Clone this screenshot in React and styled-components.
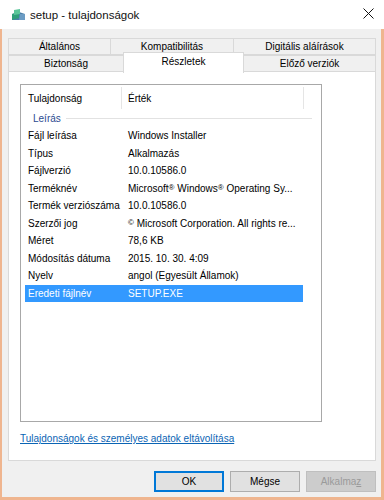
import React from 'react';
import styled, { createGlobalStyle } from 'styled-components';

const GlobalStyle = createGlobalStyle`
  html, body {
    margin: 0;
    padding: 0;
    background: #ffffff;
  }
  body {
    font-family: 'Liberation Sans', Arial, sans-serif;
    color: #000;
  }
`;

const tabRows = [
  [
    { label: 'Általános', w: 103 },
    { label: 'Kompatibilitás', w: 124 },
    { label: 'Digitális aláírások', w: 143 },
  ],
  [
    { label: 'Biztonság', w: 116 },
    { label: 'Részletek', w: 121, active: true },
    { label: 'Előző verziók', w: 133 },
  ],
];

function App() {
  const details = [
    { name: 'Fájl leírása', value: 'Windows Installer' },
    { name: 'Típus', value: 'Alkalmazás' },
    { name: 'Fájlverzió', value: '10.0.10586.0' },
    { name: 'Terméknév', value: <>Microsoft<Mark>®</Mark> Windows<Mark>®</Mark> Operating Sy...</> },
    { name: 'Termék verziószáma', value: '10.0.10586.0' },
    { name: 'Szerzői jog', value: <><Mark>©</Mark> Microsoft Corporation. All rights re...</> },
    { name: 'Méret', value: '78,6 KB' },
    { name: 'Módosítás dátuma', value: '2015. 10. 30. 4:09' },
    { name: 'Nyelv', value: 'angol (Egyesült Államok)' },
    { name: 'Eredeti fájlnév', value: 'SETUP.EXE', selected: true },
  ];

  return (
    <>
      <GlobalStyle />
      <Window>
        <TitleBar>
          <svg width="15" height="12" viewBox="0 0 15 12">
            <path d="M1 5 L8 3 L14 5 L14 11 L1 11 Z" fill="#4a7fa8" />
            <path d="M1 5 L8 3 L8 9 L1 11 Z" fill="#2f9e7a" />
            <path d="M3 1 L9 0 L9 5 L3 6 Z" fill="#5bc59a" />
            <path d="M9 5 L14 5 L14 11 L8 11 Z" fill="#6c9cc4" />
          </svg>
          <Title>setup - tulajdonságok</Title>
          <CloseButton>
            <svg width="11" height="11" viewBox="0 0 11 11">
              <path d="M0.5 0.5 L10.5 10.5 M10.5 0.5 L0.5 10.5" stroke="#111" strokeWidth="1" />
            </svg>
          </CloseButton>
        </TitleBar>

        <Frame>
          <Tabs>
            {tabRows.map((row, i) => (
              <TabRow key={i}>
                {row.map((t) => (
                  <Tab key={t.label} $w={t.w} $active={t.active}>
                    {t.label}
                  </Tab>
                ))}
              </TabRow>
            ))}
          </Tabs>

          <Pane>
            <ListBox>
              <HeaderRow>
                <HeaderCell $w={101} $pad={7}>Tulajdonság</HeaderCell>
                <HeaderCell $w={182} $pad={6}>Érték</HeaderCell>
              </HeaderRow>
              <GroupRow>
                <GroupLabel>Leírás</GroupLabel>
                <GroupLine />
              </GroupRow>
              {details.map((d) => (
                <Row key={d.name} $selected={d.selected}>
                  <NameCell>{d.name}</NameCell>
                  <ValueCell>{d.value}</ValueCell>
                </Row>
              ))}
            </ListBox>
            <RemoveLink href="#">Tulajdonságok és személyes adatok eltávolítása</RemoveLink>
          </Pane>

          <ButtonRow>
            <Button $default>OK</Button>
            <Button>Mégse</Button>
            <Button disabled>
              Alkalma<u>z</u>
            </Button>
          </ButtonRow>
        </Frame>
      </Window>
    </>
  );
}

const Window = styled.div`
  width: 384px;
  height: 500px;
  display: flex;
  flex-direction: column;
  background: #fff;
  overflow: hidden;
`;

const TitleBar = styled.div`
  height: 29px;
  flex-shrink: 0;
  display: flex;
  align-items: center;
  padding-left: 9px;
  background: #ffffff;
  border-left: 2px solid #ffffff;
`;

const Title = styled.span`
  margin-left: 4px;
  font-size: 11.5px;
  color: #111;
`;

const CloseButton = styled.div`
  margin-left: auto;
  width: 11px;
  height: 11px;
  margin-right: 10px;
  margin-top: -2px;
  display: flex;
`;

const Frame = styled.div`
  flex: 1;
  background: #f0f0f0;
  border-left: 2px solid #efb58f;
  border-right: 3px solid #efb58f;
  border-bottom: 3px solid #efb58f;
  padding: 9px 5px 0 6px;
  display: flex;
  flex-direction: column;
`;

const Tabs = styled.div`
  display: flex;
  flex-direction: column;
`;

const TabRow = styled.div`
  display: flex;
  height: 17px;
  align-items: flex-end;
`;

const Tab = styled.div`
  box-sizing: border-box;
  width: ${(p) => p.$w}px;
  height: ${(p) => (p.$active ? 21 : 17)}px;
  margin-bottom: ${(p) => (p.$active ? -1 : 0)}px;
  margin-left: -1px;
  position: relative;
  z-index: ${(p) => (p.$active ? 2 : 1)};
  display: flex;
  align-items: center;
  justify-content: center;
  padding-bottom: ${(p) => (p.$active ? 3 : 0)}px;
  font-size: 10px;
  color: #000;
  background: ${(p) => (p.$active ? '#ffffff' : '#f0f0f0')};
  border: 1px solid #d9d9d9;
  border-bottom: ${(p) => (p.$active ? 'none' : '1px solid #d9d9d9')};

  &:first-child {
    margin-left: 0;
  }
`;

const Pane = styled.div`
  box-sizing: border-box;
  width: 368px;
  height: 390px;
  margin-top: -1px;
  background: #ffffff;
  border: 1px solid #d9d9d9;
  padding: 12px 0 0 11px;
  display: flex;
  flex-direction: column;
`;

const ListBox = styled.div`
  box-sizing: border-box;
  width: 302px;
  height: 338px;
  border: 1px solid #a8a8a8;
  display: flex;
  flex-direction: column;
  font-size: 10px;
`;

const HeaderRow = styled.div`
  display: flex;
  height: 24px;
  flex-shrink: 0;
`;

const HeaderCell = styled.div`
  box-sizing: border-box;
  width: ${(p) => p.$w}px;
  padding-left: ${(p) => p.$pad}px;
  display: flex;
  align-items: center;
  border-right: 1px solid #e5e5e5;
  margin-top: 2px;
`;

const GroupRow = styled.div`
  height: 18px;
  display: flex;
  align-items: center;
  padding-left: 12px;
  padding-right: 9px;
`;

const GroupLabel = styled.span`
  color: #2a4a8f;
  font-size: 10px;
`;

const GroupLine = styled.div`
  flex: 1;
  height: 1px;
  background: #e2e2e2;
  margin-left: 5px;
`;

const Row = styled.div`
  display: flex;
  align-items: center;
  width: 278px;
  height: 17.5px;
  margin-left: 4px;
  background: ${(p) => (p.$selected ? '#3399ff' : 'transparent')};
  color: ${(p) => (p.$selected ? '#ffffff' : '#000000')};
`;

const NameCell = styled.div`
  width: 100px;
  padding-left: 3px;
  box-sizing: border-box;
  white-space: nowrap;
`;

const ValueCell = styled.div`
  padding-left: 3px;
  white-space: nowrap;
`;

const Mark = styled.span`
  font-size: 8px;
  vertical-align: 2px;
`;

const RemoveLink = styled.a`
  margin-top: 11px;
  font-size: 10px;
  color: #0a64b4;
  text-decoration: underline;
  align-self: flex-start;
`;

const ButtonRow = styled.div`
  display: flex;
  justify-content: flex-end;
  gap: 6px;
  margin-top: 10px;
`;

const Button = styled.button`
  box-sizing: border-box;
  width: 70px;
  height: 21px;
  padding: 0;
  font-family: 'Liberation Sans', Arial, sans-serif;
  font-size: 10px;
  color: #000;
  background: #e1e1e1;
  border: 1px solid ${(p) => (p.$default ? '#0078d7' : '#adadad')};
  box-shadow: ${(p) => (p.$default ? 'inset 0 0 0 1px #0078d7' : 'none')};

  &:disabled {
    color: #9a9a9a;
    background: #cccccc;
    border-color: #bfbfbf;
  }
`;

export default App;
